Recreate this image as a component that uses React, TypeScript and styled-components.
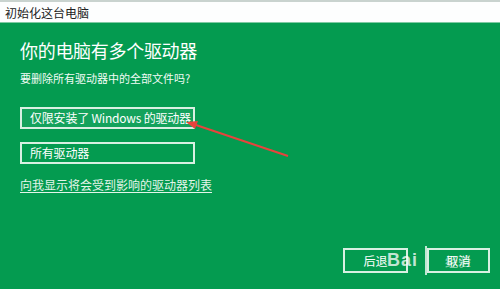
import styled, { createGlobalStyle } from "styled-components";

const GlobalStyle = createGlobalStyle`
  html, body {
    margin: 0;
    padding: 0;
    background: #049b50;
  }
  body {
    font-family: "Noto Sans CJK SC", "Noto Sans", sans-serif;
  }
`;

const Window = styled.div`
  position: relative;
  width: 500px;
  height: 289px;
  display: flex;
  flex-direction: column;
  overflow: hidden;
`;

const TitleBar = styled.div`
  height: 20px;
  border-top: 2px solid #c9d3cf;
  border-bottom: 1px solid #7fcaa3;
  background: #fdfefe;
  display: flex;
  align-items: center;
  padding-left: 5px;
  font-size: 12px;
  color: #222;
`;

const Body = styled.div`
  flex: 1;
  background: #049b50;
  display: flex;
  flex-direction: column;
  padding: 14px 10px 16px 20px;
  color: #fff;
`;

const Heading = styled.h1`
  margin: 0;
  font-size: 18px;
  font-weight: 400;
  line-height: 26px;
  letter-spacing: -0.3px;
`;

const Question = styled.p`
  margin: 7px 0 0;
  font-size: 11px;
  line-height: 16px;
  color: #f2fbf6;
`;

const Options = styled.div`
  margin-top: 21px;
  display: flex;
  flex-direction: column;
  gap: 13px;
`;

const Option = styled.button<{ $active?: boolean }>`
  width: 175px;
  height: 22px;
  box-sizing: border-box;
  border: 2px solid #d9f0e2;
  background: ${(p) => (p.$active ? "#14a25c" : "transparent")};
  color: #fff;
  font-family: inherit;
  font-size: 12px;
  text-align: left;
  white-space: nowrap;
  overflow: hidden;
  letter-spacing: -0.2px;
  padding: 0 0 0 8px;
  line-height: 18px;
`;

const Link = styled.a`
  margin-top: 12px;
  font-size: 12px;
  line-height: 18px;
  color: #e4f5ea;
  text-decoration: underline;
  text-underline-offset: 2px;
`;

const Footer = styled.div`
  margin-top: auto;
  display: flex;
  justify-content: flex-end;
  gap: 19px;
`;

const FooterButton = styled.button<{ $w: number }>`
  width: ${(p) => p.$w}px;
  height: 25px;
  box-sizing: border-box;
  border: 2px solid #d9f0e2;
  background: transparent;
  color: #fff;
  font-family: inherit;
  font-size: 12px;
  padding: 0;
`;

const Watermark = styled.div`
  position: absolute;
  left: 387px;
  top: 246px;
  display: flex;
  align-items: center;
  white-space: nowrap;
  pointer-events: none;
`;

const MarkLatin = styled.span`
  font-family: "Liberation Sans", sans-serif;
  font-weight: 700;
  font-size: 18px;
  letter-spacing: 1px;
  width: 38px;
  color: rgba(255, 255, 255, 0.75);
`;

const MarkBar = styled.span`
  width: 2px;
  height: 29px;
  background: rgba(255, 255, 255, 0.75);
`;

const MarkCjk = styled.span`
  font-size: 13px;
  margin-left: 18px;
  color: rgba(255, 255, 255, 0.5);
`;

const Arrow = styled.svg`
  position: absolute;
  left: 180px;
  top: 112px;
  pointer-events: none;
`;

export default function App() {
  return (
    <>
      <GlobalStyle />
      <Window>
        <TitleBar>初始化这台电脑</TitleBar>
        <Body>
          <Heading>你的电脑有多个驱动器</Heading>
          <Question>要删除所有驱动器中的全部文件吗?</Question>
          <Options>
            <Option $active>仅限安装了 Windows 的驱动器</Option>
            <Option>所有驱动器</Option>
          </Options>
          <Link>向我显示将会受到影响的驱动器列表</Link>
          <Footer>
            <FooterButton $w={65}>后退</FooterButton>
            <FooterButton $w={63}>取消</FooterButton>
          </Footer>
        </Body>
        <Watermark>
          <MarkLatin>Bai</MarkLatin>
          <MarkBar />
          <MarkCjk>经验</MarkCjk>
        </Watermark>
        <Arrow width="115" height="50" viewBox="0 0 115 50">
          <line x1="108" y1="44" x2="10" y2="11" stroke="#e8433c" strokeWidth="2" />
          <polygon points="6,10 18,9 15,17" fill="#e8433c" />
        </Arrow>
      </Window>
    </>
  );
}
